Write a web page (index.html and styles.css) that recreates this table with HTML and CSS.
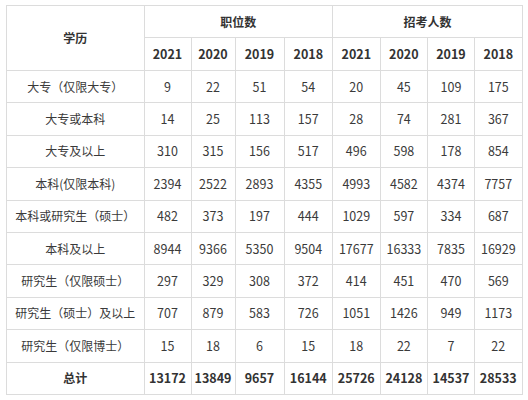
FILE: index.html
```html
<!DOCTYPE html>
<html lang="zh-CN">
<head>
<meta charset="utf-8">
<title>职位数与招考人数</title>
<link rel="stylesheet" href="styles.css">
</head>
<body>
<table class="stats">
  <colgroup>
    <col class="c-edu">
    <col class="c-a1"><col class="c-a2"><col class="c-a3"><col class="c-a4">
    <col class="c-b1"><col class="c-b2"><col class="c-b3"><col class="c-b4">
  </colgroup>
  <thead>
    <tr class="hr1">
      <th rowspan="2" class="edu-head">学历</th>
      <th colspan="4">职位数</th>
      <th colspan="4">招考人数</th>
    </tr>
    <tr class="hr2">
      <th class="num">2021</th><th class="num">2020</th><th class="num">2019</th><th class="num">2018</th>
      <th class="num">2021</th><th class="num">2020</th><th class="num">2019</th><th class="num">2018</th>
    </tr>
  </thead>
  <tbody>
    <tr><td>大专（仅限大专）</td><td>9</td><td>22</td><td>51</td><td>54</td><td>20</td><td>45</td><td>109</td><td>175</td></tr>
    <tr><td>大专或本科</td><td>14</td><td>25</td><td>113</td><td>157</td><td>28</td><td>74</td><td>281</td><td>367</td></tr>
    <tr><td>大专及以上</td><td>310</td><td>315</td><td>156</td><td>517</td><td>496</td><td>598</td><td>178</td><td>854</td></tr>
    <tr><td>本科(仅限本科)</td><td>2394</td><td>2522</td><td>2893</td><td>4355</td><td>4993</td><td>4582</td><td>4374</td><td>7757</td></tr>
    <tr><td>本科或研究生（硕士）</td><td>482</td><td>373</td><td>197</td><td>444</td><td>1029</td><td>597</td><td>334</td><td>687</td></tr>
    <tr><td>本科及以上</td><td>8944</td><td>9366</td><td>5350</td><td>9504</td><td>17677</td><td>16333</td><td>7835</td><td>16929</td></tr>
    <tr><td>研究生（仅限硕士）</td><td>297</td><td>329</td><td>308</td><td>372</td><td>414</td><td>451</td><td>470</td><td>569</td></tr>
    <tr><td>研究生（硕士）及以上</td><td>707</td><td>879</td><td>583</td><td>726</td><td>1051</td><td>1426</td><td>949</td><td>1173</td></tr>
    <tr><td>研究生（仅限博士）</td><td>15</td><td>18</td><td>6</td><td>15</td><td>18</td><td>22</td><td>7</td><td>22</td></tr>
    <tr class="total"><td>总计</td><td>13172</td><td>13849</td><td>9657</td><td>16144</td><td>25726</td><td>24128</td><td>14537</td><td>28533</td></tr>
  </tbody>
</table>
</body>
</html>
```

FILE: styles.css
```css
html, body {
  margin: 0;
  padding: 0;
  background: #ffffff;
}

body {
  padding: 5px 0 0 6px;
  font-family: "Noto Sans CJK SC", "Open Sans", sans-serif;
  font-size: 12px;
  color: #3a3a3a;
}

.stats {
  border-collapse: collapse;
  table-layout: fixed;
  width: 516px;
}

.c-edu { width: 137.5px; }
.c-a1 { width: 47px; }
.c-a2 { width: 44px; }
.c-a3 { width: 49px; }
.c-a4 { width: 48.5px; }
.c-b1 { width: 47.5px; }
.c-b2 { width: 47.7px; }
.c-b3 { width: 46.6px; }
.c-b4 { width: 48px; }

.stats th,
.stats td {
  border: 1px solid #dcdcdc;
  text-align: center;
  vertical-align: middle;
  padding: 0;
  white-space: nowrap;
  line-height: 16px;
}

.stats td + td,
.stats th.num {
  font-size: 12.5px;
}

.stats th {
  font-weight: 700;
  color: #333333;
}

.hr1 { height: 32px; }
.hr2 { height: 33px; }
.stats tbody tr { height: 32.4px; }

.total td {
  font-weight: 700;
  color: #333333;
}
```
